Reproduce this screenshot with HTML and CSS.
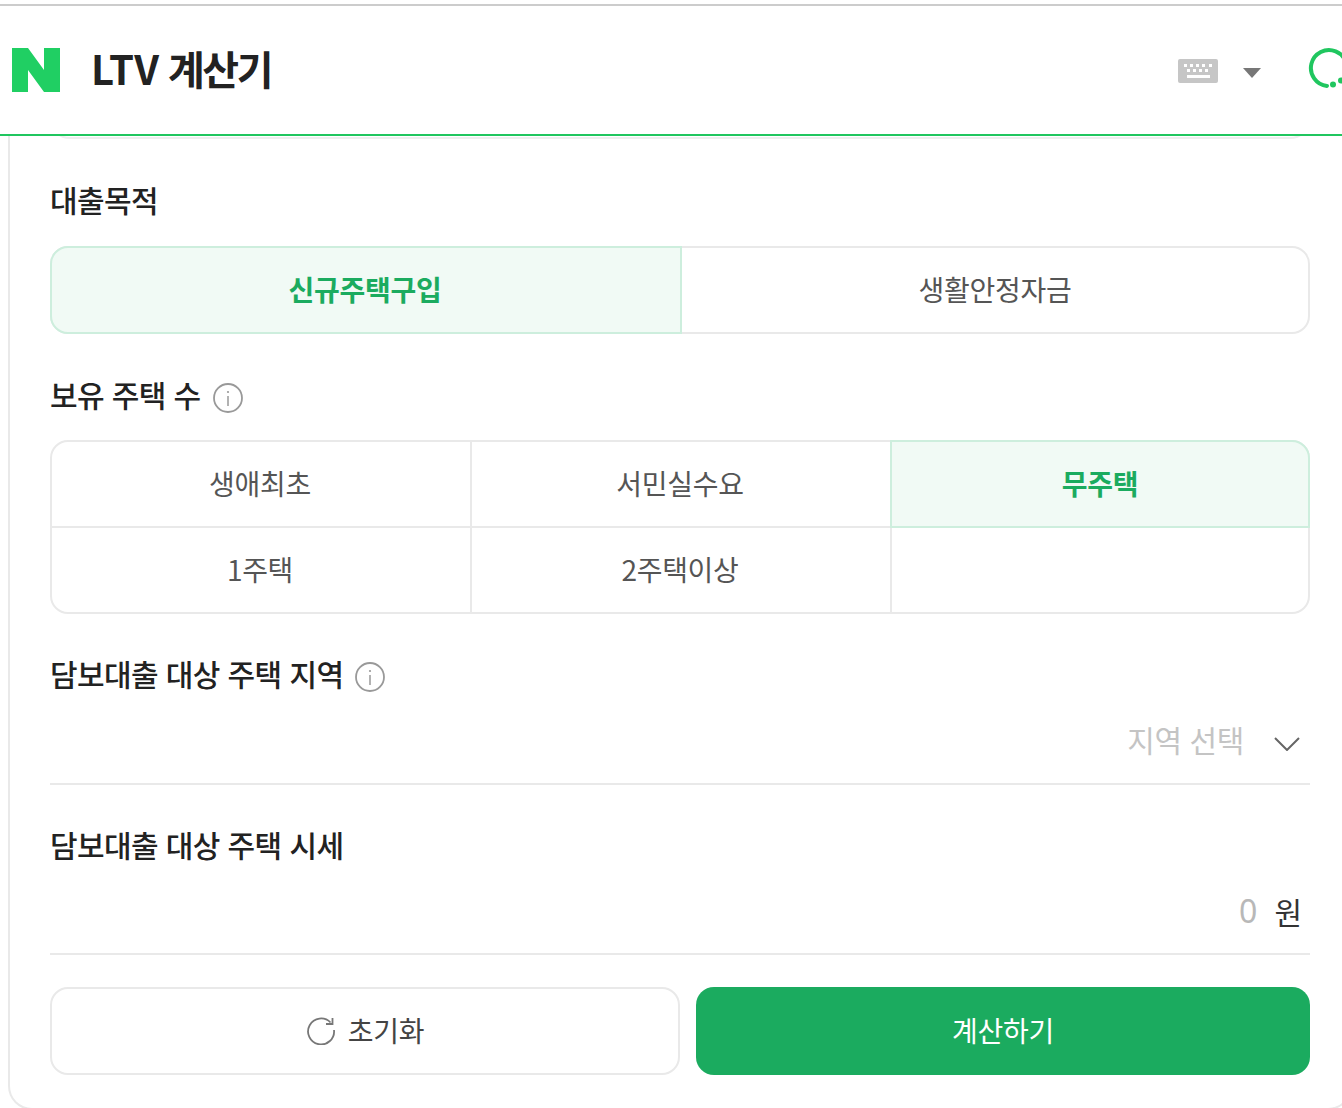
FILE: index.html
```html
<!DOCTYPE html>
<html lang="ko">
<head>
<meta charset="utf-8">
<title>LTV 계산기</title>
<link rel="stylesheet" href="styles.css">
</head>
<body>
<div class="page">
  <header class="header">
    <svg class="logo" width="48" height="44" viewBox="0 0 48 44"><polygon fill="#20cf63" points="0,0 16,0 32,22 32,0 48,0 48,44 32,44 16,22 16,44 0,44"/></svg>
    <h1 class="title"><span class="latin">LTV</span> 계산기</h1>
    <svg class="kbd" width="40" height="24" viewBox="0 0 40 24">
      <rect width="40" height="24" rx="2" fill="#c6c6c6"/>
      <g fill="#fff">
        <rect x="6" y="5" width="3" height="3"/><rect x="12" y="5" width="3" height="3"/><rect x="18" y="5" width="3" height="3"/><rect x="24" y="5" width="3" height="3"/><rect x="31" y="5" width="3" height="3"/>
        <rect x="9" y="10" width="3" height="3"/><rect x="15" y="10" width="3" height="3"/><rect x="21" y="10" width="3" height="3"/><rect x="27" y="10" width="3" height="3"/>
        <rect x="9" y="16" width="23" height="3"/>
      </g>
    </svg>
    <svg class="caret" width="18" height="10" viewBox="0 0 18 10"><polygon fill="#777" points="0,0 18,0 9,10"/></svg>
    <svg class="search" width="44" height="44" viewBox="0 0 44 44">
      <path d="M20 38.9A18 18 0 1 1 37.5 30" fill="none" stroke="#20c65f" stroke-width="4" stroke-linecap="round"/>
      <circle cx="26" cy="37.5" r="3" fill="#20c65f"/><circle cx="34" cy="33.5" r="3" fill="#20c65f"/>
    </svg>
  </header>
  <main class="panel">
    <div class="prev-box"></div>

    <h2 class="label label-first">대출목적</h2>
    <div class="seg seg-two">
      <button class="opt on">신규주택구입</button>
      <button class="opt">생활안정자금</button>
    </div>

    <h2 class="label label-info">보유 주택 수
      <svg class="info" width="30" height="30" viewBox="0 0 30 30"><circle cx="15" cy="15" r="14" fill="none" stroke="#999" stroke-width="1.8"/><circle cx="15" cy="9" r="1.1" fill="#999"/><path d="M15 13v10" stroke="#999" stroke-width="1.5"/></svg>
    </h2>
    <div class="seg seg-three">
      <button class="opt">생애최초</button>
      <button class="opt">서민실수요</button>
      <button class="opt on">무주택</button>
      <button class="opt">1주택</button>
      <button class="opt">2주택이상</button>
      <div class="opt"></div>
    </div>

    <h2 class="label label-region">담보대출 대상 주택 지역
      <svg class="info" width="30" height="30" viewBox="0 0 30 30"><circle cx="15" cy="15" r="14" fill="none" stroke="#999" stroke-width="1.8"/><circle cx="15" cy="9" r="1.1" fill="#999"/><path d="M15 13v10" stroke="#999" stroke-width="1.5"/></svg>
    </h2>
    <div class="field field-select">
      <span class="placeholder">지역 선택</span>
      <svg class="chevron" width="26" height="14" viewBox="0 0 26 14"><path d="M1 1l12 12L25 1" fill="none" stroke="#666" stroke-width="2"/></svg>
    </div>

    <h2 class="label label-price">담보대출 대상 주택 시세</h2>
    <div class="field field-amount">
      <span class="zero">0</span>
      <span class="unit">원</span>
    </div>

    <div class="actions">
      <button class="btn btn-reset">
        <svg width="30" height="30" viewBox="0 0 30 30"><path d="M24.5 7.5A13 13 0 1 0 28 15" fill="none" stroke="#777" stroke-width="1.8"/><path d="M26.5 3v6H20" fill="none" stroke="#777" stroke-width="1.8"/></svg>
        <span>초기화</span>
      </button>
      <button class="btn btn-calc">계산하기</button>
    </div>
  </main>
</div>
</body>
</html>
```
FILE: styles.css
```css
* { box-sizing: border-box; }
html, body { margin: 0; height: 1108px; overflow: hidden; background: #fff; }
body { font-family: "Noto Sans CJK KR", "Noto Sans", sans-serif; color: #222; }
.page { width: 1342px; height: 1108px; overflow: hidden; padding-top: 4px; }

.header {
  position: relative;
  z-index: 2;
  height: 132px;
  display: flex;
  align-items: center;
  padding: 0 0 0 12px;
  background: #fff;
  border-top: 2px solid #ccc;
  border-bottom: 2px solid #20c65f;
}
.logo { flex: none; }
.title { margin: 0 0 4px 31px; font-size: 40px; font-weight: 700; letter-spacing: -2.5px; line-height: 50px; color: #222; }
.latin { letter-spacing: 0.3px; }
.kbd { flex: none; margin-left: auto; margin-top: 2px; }
.caret { flex: none; margin-left: 25px; margin-top: 6px; }
.search { flex: none; margin-left: 46px; margin-right: -9px; margin-top: -2px; }

.panel {
  display: flow-root;
  width: 1344px;
  height: 974px;
  margin-left: 8px;
  padding: 0 40px;
  border: 2px solid #e9e9e9;
  border-top: 0;
  border-radius: 0 0 24px 24px;
}
.prev-box { height: 40px; margin-top: -37px; border: 2px solid #eee; border-radius: 24px; }

.label { margin: 0; font-size: 30px; font-weight: 500; letter-spacing: -0.6px; line-height: 40px; color: #222; display: flex; align-items: center; gap: 12px; }
.label-first { margin-top: 40px; }
.label-info { margin-top: 40px; }
.label-region { margin-top: 39px; }
.label-price { margin-top: 39px; }
.info { flex: none; margin-top: 7px; }

.seg { display: grid; margin-top: 26px; border: 2px solid #e9e9e9; border-radius: 18px; background: #fff; }
.seg-two { grid-template-columns: 630px 1fr; height: 88px; margin-top: 27px; }
.seg-three { grid-template-columns: 420px 420px 1fr; grid-template-rows: 86px 84px; height: 174px; }
.opt {
  appearance: none;
  margin: 0;
  padding: 0;
  background: transparent;
  border: 0;
  border-right: 2px solid #e9e9e9;
  font: 400 28px "Noto Sans CJK KR", sans-serif;
  letter-spacing: -0.3px;
  color: #555;
}
.seg-two .opt { padding-bottom: 2px; }
.seg-three .opt { border-bottom: 2px solid #e9e9e9; padding: 0 2px 2px 0; }
.seg-three .opt:nth-child(n+4) { border-bottom: 0; }
.seg-two .opt:last-child, .seg-three .opt:last-child { border-right: 0; }
.seg .on { position: relative; background: #f1faf5; color: #1bab5f; font-weight: 700; border: 2px solid #cdeedd; }
.seg-two .on { margin: -2px 0 -2px -2px; padding-right: 2px; border-radius: 18px 0 0 18px; }
.seg-three .on { margin: -2px -2px 0 -2px; border-radius: 0 18px 0 0; padding-right: 0; }

.field { display: flex; align-items: center; justify-content: flex-end; border-bottom: 2px solid #e9e9e9; }
.field-select { height: 83px; margin-top: 9px; padding: 0 10px 7px 0; }
.placeholder { font-size: 30px; letter-spacing: -0.4px; color: #c4c4c4; }
.chevron { margin-left: 30px; margin-top: 10px; }
.field-amount { height: 83px; margin-top: 8px; padding: 0 8px 4px 0; }
.zero { font-size: 32px; font-weight: 400; color: #b8b8b8; font-family: "Noto Sans", sans-serif; }
.unit { font-size: 30px; margin-left: 17px; color: #333; }

.actions { display: flex; gap: 16px; margin-top: 32px; }
.btn { appearance: none; margin: 0; padding: 0 0 2px; height: 88px; display: flex; align-items: center; justify-content: center; font: 400 28px "Noto Sans CJK KR", sans-serif; letter-spacing: -0.3px; border-radius: 18px; }
.btn-reset { width: 630px; background: #fff; border: 2px solid #e9e9e9; color: #444; gap: 12px; }
.btn-calc { width: 614px; background: #1bab5f; border: 0; color: #fff; }
```
